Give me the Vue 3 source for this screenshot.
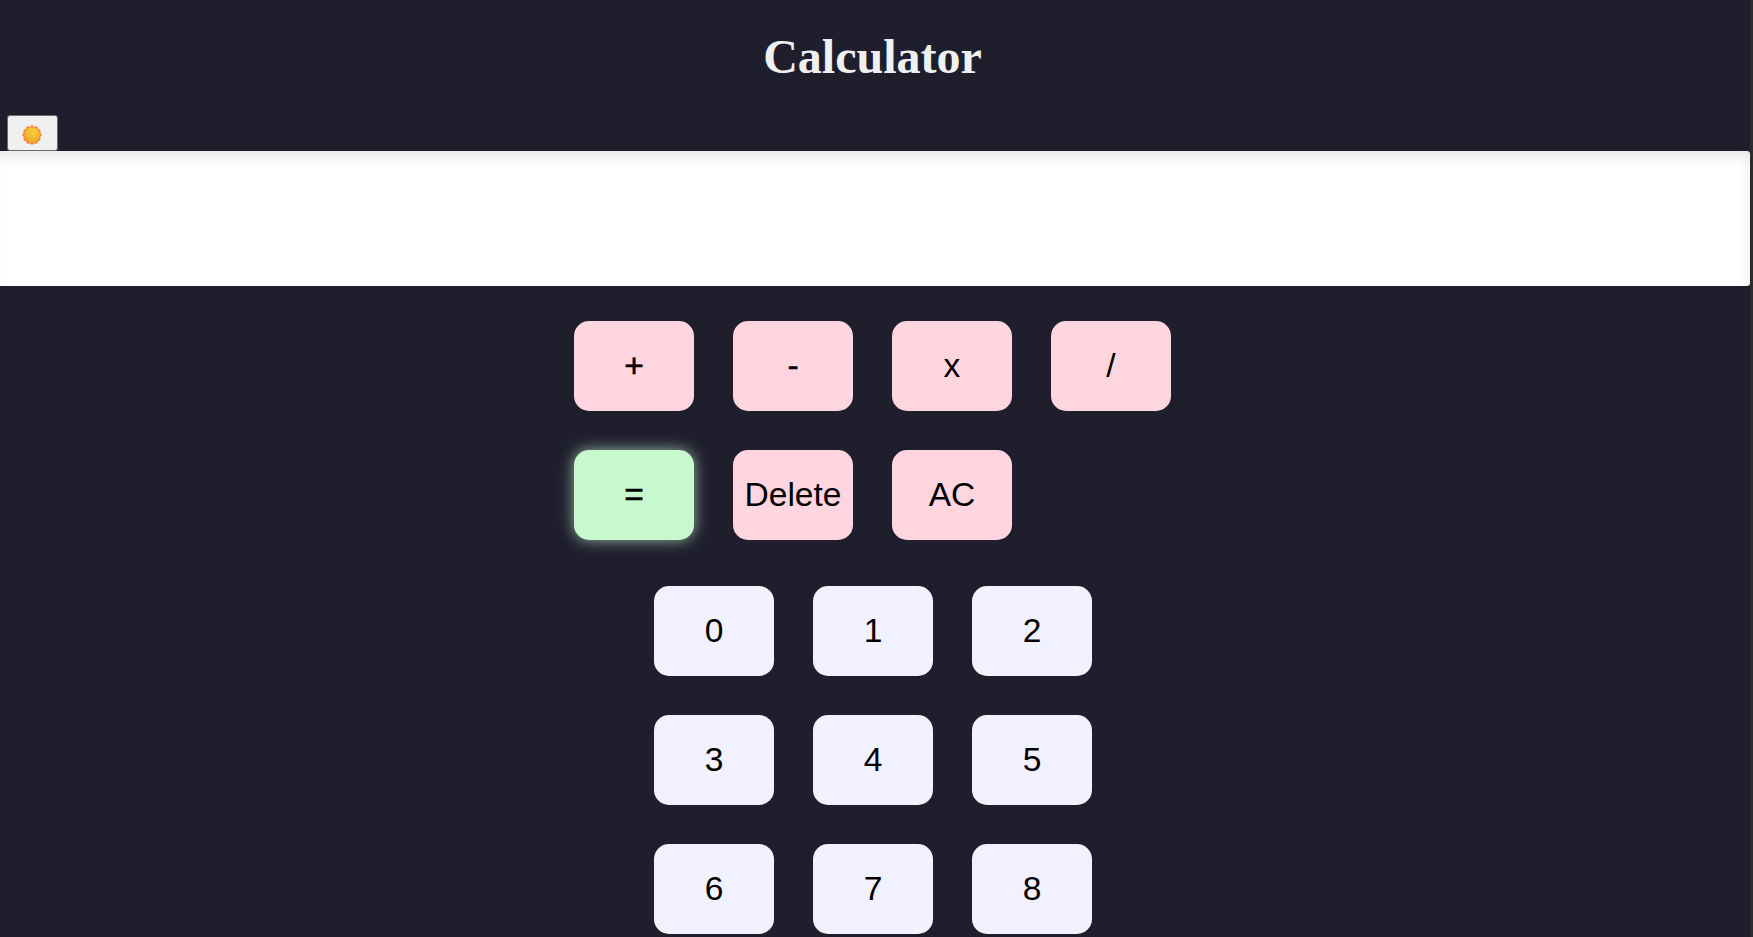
<script setup>
const operators = ['+', '-', 'x', '/', '=', 'Delete', 'AC']
const digits = [0, 1, 2, 3, 4, 5, 6, 7, 8]
const isSymbol = (key) => ['+', '-', '='].includes(key)
</script>

<template>
  <div class="page">
    <main class="calculator">
      <h1 class="title">Calculator</h1>
      <button class="theme" aria-label="Toggle theme">
        <svg width="20" height="20" viewBox="0 0 20 20">
          <defs>
            <radialGradient id="sun-core" cx="0.6" cy="0.3" r="0.75">
              <stop offset="0" stop-color="#fad03a" />
              <stop offset="1" stop-color="#e8a62f" />
            </radialGradient>
          </defs>
          <g fill="#f98436">
            <circle v-for="n in 12" :key="n" cx="10" cy="2" r="1.7" :transform="`rotate(${n * 30} 10 10)`" />
            <circle cx="10" cy="10" r="8.7" />
          </g>
          <circle cx="10" cy="10" r="7.8" fill="url(#sun-core)" />
        </svg>
      </button>
      <div class="display"></div>
      <div class="keys operators">
        <button
          v-for="key in operators"
          :key="key"
          class="key"
          :class="{ equals: key === '=', symbol: isSymbol(key) }"
        >{{ key }}</button>
      </div>
      <div class="keys digits">
        <button v-for="key in digits" :key="key" class="key digit">{{ key }}</button>
      </div>
    </main>
    <div class="edge"></div>
  </div>
</template>

<style>
body {
  margin: 0;
  overflow: hidden;
}
</style>

<style scoped>
.page {
  display: flex;
  height: 937px;
  overflow: hidden;
  background: #1f1e2d;
}
.calculator {
  flex: 1;
  display: flex;
  flex-direction: column;
  align-items: flex-start;
}
.edge {
  width: 3px;
  background: #2c2c2b;
}
.title {
  box-sizing: border-box;
  width: 1745px;
  height: 115px;
  margin: 0;
  padding-top: 29px;
  text-align: center;
  font: bold 48px/55px "Liberation Serif", serif;
  color: #f0f0f0;
}
.theme {
  display: flex;
  align-items: center;
  justify-content: center;
  box-sizing: border-box;
  width: 51px;
  height: 36px;
  margin-left: 7px;
  padding: 4px 1px 0 0;
  border: 1px solid #6b6b6b;
  border-radius: 3px;
  background: #efefef;
}
.display {
  width: calc(100% + 8px);
  height: 135px;
  margin-left: -8px;
  border-radius: 3px;
  background: #fff;
  box-shadow: inset 0 7px 16px -3px rgba(0, 0, 0, 0.11);
}
.keys {
  display: grid;
  gap: 39px;
}
.operators {
  grid-template-columns: repeat(4, 120px);
  margin: 35px 0 0 574px;
}
.digits {
  grid-template-columns: repeat(3, 120px);
  margin: 46px 0 0 654px;
}
.key {
  height: 90px;
  padding: 0 0 1px;
  border: 0;
  border-radius: 15px;
  background: #ffd5df;
  color: #000;
  font: 33.6px "Liberation Sans", Arial, sans-serif;
}
.symbol {
  -webkit-text-stroke: 0.5px #000;
}
.equals {
  background: #c8f8ce;
  box-shadow: 0 0 15px rgba(200, 248, 206, 0.7);
}
.digit {
  background: #f2f1ff;
}
</style>
